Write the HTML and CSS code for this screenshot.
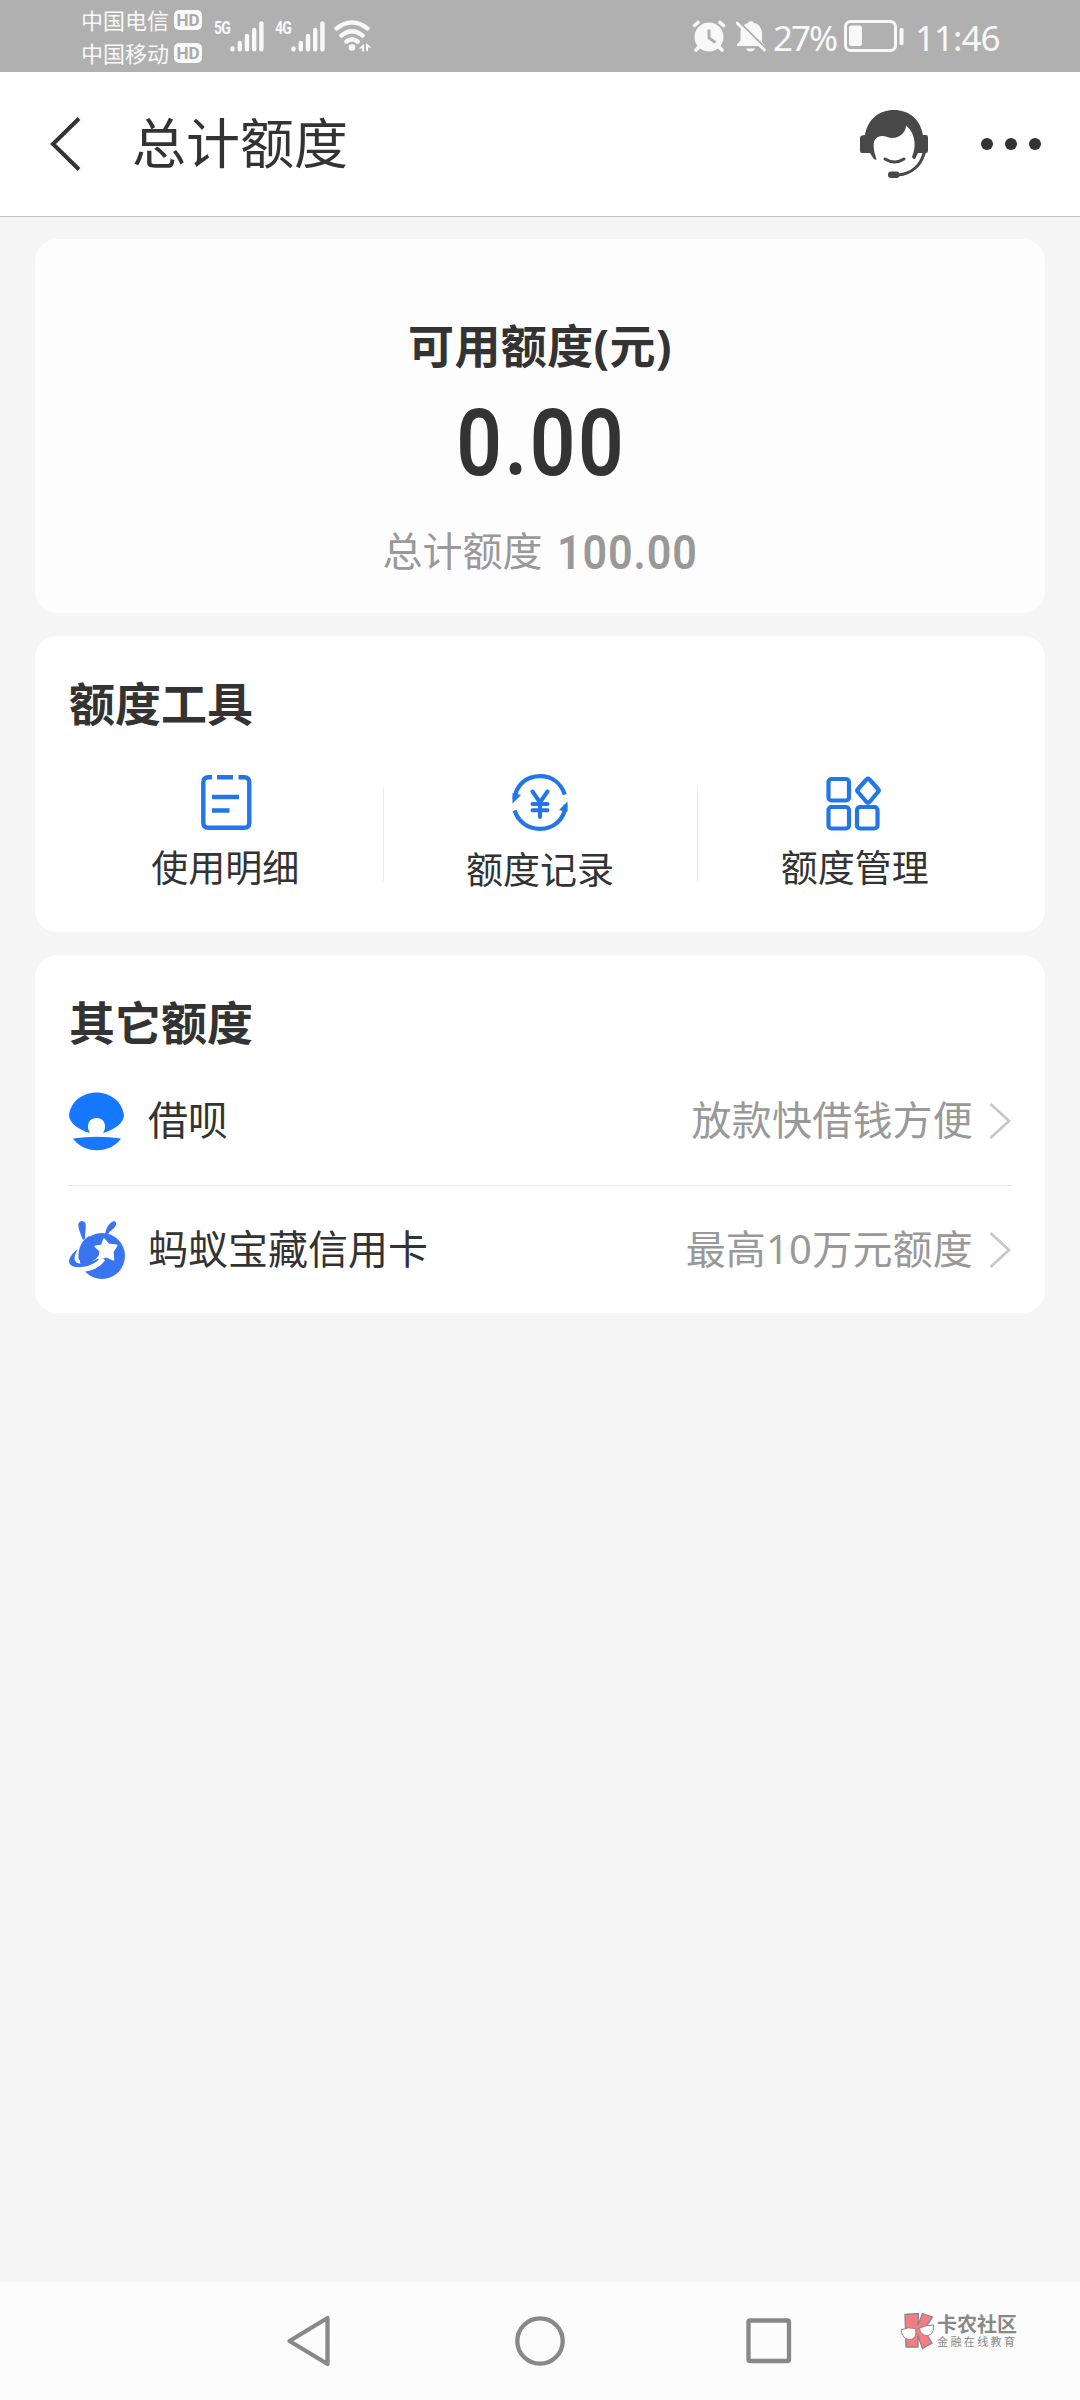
FILE: index.html
```
<!DOCTYPE html>
<html lang="zh-CN">
<head>
<meta charset="utf-8">
<title>总计额度</title>
<link rel="stylesheet" href="styles.css">
</head>
<body>
<div class="statusbar">
  <div class="carriers">
    <div class="carrier"><span>中国电信</span><span class="hd">HD</span></div>
    <div class="carrier"><span>中国移动</span><span class="hd">HD</span></div>
  </div>
  <div class="signal"><span class="gen">5G</span>
    <svg width="34" height="32" viewBox="0 0 34 32"><g stroke="#f8f8f8" stroke-width="4.4" stroke-linecap="round"><path d="M2.5 28.5v.8M9.8 23v6.3M17 16v13.300M24.200 10v19.300M31.400 3.500v25.800"/></g></svg>
  </div>
  <div class="signal second"><span class="gen">4G</span>
    <svg width="34" height="32" viewBox="0 0 34 32"><g stroke="#f8f8f8" stroke-width="4.4" stroke-linecap="round"><path d="M2.500 28.500v.8M9.800 23v6.300M17 16v13.300M24.200 10v19.300M31.400 3.500v25.800"/></g></svg>
  </div>
  <svg class="wifi" width="38" height="32" viewBox="0 0 38 32"><g fill="none" stroke="#f8f8f8" stroke-width="4.400" stroke-linecap="round"><path d="M2.500 8.500Q18 -3.500 33.500 8.500M7.500 15.500Q18 7 28.500 15.500M12.500 21.500Q18 17 23.500 21.500"/></g><circle cx="18" cy="27.500" r="3.300" fill="#f8f8f8"/><path d="M30 24v7.500h-1.800V28.500h-3.500zM32 31v-8l5.500 4.500h-3.500v3.500z" fill="#f8f8f8"/></svg>
  <div class="status-right">
    <svg width="34" height="32" viewBox="0 0 34 32"><path d="M2.500 5.500 6 2.500M28 2.500l3.500 3M7 27l-3 3M27 27l3 3" stroke="#f8f8f8" stroke-width="3.600" stroke-linecap="round"/><circle cx="17" cy="17" r="14.500" fill="#f8f8f8"/><path d="M17 9.500V18l6.500 4.500" fill="none" stroke="#b0b0b0" stroke-width="3"/></svg>
    <svg class="bell" width="30" height="33" viewBox="0 0 30 33"><path d="M4.500 13.500C4.500 7 8 4 12 3c1-2.500 5-2.500 6 0 5 1 8 5 8 11v8l3 4H1v-1.500l3.500-4zM10 28.500h9c-1 4-8 4-9 0z" fill="#f8f8f8"/><path d="M0 -.5 30 29" stroke="#b0b0b0" stroke-width="3"/><path d="M1 3 28.500 30" stroke="#f8f8f8" stroke-width="3" stroke-linecap="round"/></svg>
    <span class="percent">27%</span>
    <svg class="battery" width="60" height="32" viewBox="0 0 60 32"><rect x="1.500" y="1.500" width="50" height="29" rx="5" fill="none" stroke="#f8f8f8" stroke-width="3"/><rect x="5" y="5.500" width="13" height="20.500" rx="2.500" fill="#f8f8f8"/><rect x="55.500" y="8" width="4" height="17" rx="1.500" fill="#f8f8f8"/></svg>
    <span class="clock">11:46</span>
  </div>
</div>
<header class="header">
  <svg class="back" width="32" height="54" viewBox="0 0 32 54"><path d="M29 1.500 3 27l26 25.500" fill="none" stroke="#333" stroke-width="4"/></svg>
  <h1 class="title">总计额度</h1>
  <svg class="service" width="68" height="68" viewBox="0 0 68 68"><path fill="#484848" d="M5 25C8 9 19 0 34 0s26 9 29 25h3q2 0 2 2v14q0 2-2 2h-8l-3 6q-2 .5-3-2c4-9 4.500-23-6-31.500C46 22 40 28 32 28c-4 0-9-4-14-1-5 2-5.500 9-2.500 19l1 3.500q-2 .5-3-1L10 43H2q-2 0-2-2V28q0-3 5-3z"/><path d="M25 49q9.500 6 19 0" fill="none" stroke="#484848" stroke-width="3" stroke-linecap="round"/><path d="M64.500 42C61 55 52 64 38 65" fill="none" stroke="#484848" stroke-width="3"/><rect x="28" y="61.500" width="11.500" height="6.500" rx="3" fill="#484848"/></svg>
  <svg class="more" width="60" height="14" viewBox="0 0 60 14"><g fill="#333"><circle cx="6" cy="7" r="6"/><circle cx="30" cy="7" r="6"/><circle cx="54" cy="7" r="6"/></g></svg>
</header>
<main class="content">
  <section class="card summary">
    <h2 class="available">可用额度(元)</h2>
    <div class="amount">0.00</div>
    <div class="total"><span>总计额度</span><span class="total-value">100.00</span></div>
  </section>
  <section class="card tools">
    <h2 class="heading">额度工具</h2>
    <div class="tool-row">
      <div class="tool">
        <svg width="60" height="60" viewBox="0 0 60 60"><g fill="none" stroke="#2376e8" stroke-width="4.400"><path d="M17 4.200h-3.700q-5 0-5 5V49.800q0 5 5 5h36q5 0 5-5V9.200q0-5-5-5H43.500M22 4.200h16"/><path d="M17 24h27M17 37.500h17.500"/></g></svg>
        <span>使用明细</span>
      </div>
      <div class="tool lowered">
        <svg width="60" height="60" viewBox="0 0 60 60"><g fill="none" stroke="#2376e8" stroke-width="4.200"><path d="M4.500 26C6 12 16 3.200 30 3.200c12 0 21 7 24.800 18.500M55.500 32c-1 15-12 23.800-25.500 23.800C17 55.800 8 48 4.600 37.500"/><path stroke-linecap="round" d="m22.500 18.500 7.500 11 7.500-11M30 30v14M22.500 31h15M22.500 37.200h15" stroke-width="4"/></g><path d="M2.500 20v10.500l8.500-8.500zM57.500 39V28.500L49 37z" fill="#2376e8"/></svg>
        <span>额度记录</span>
      </div>
      <div class="tool">
        <svg width="60" height="60" viewBox="0 0 60 60"><g fill="none" stroke="#2376e8" stroke-width="4.200"><rect x="3.500" y="6" width="20.500" height="21.500" rx="3"/><rect x="3.500" y="34" width="20.500" height="21.500" rx="3"/><rect x="32" y="34" width="20.500" height="21.500" rx="3"/><path stroke-linejoin="round" d="M41.500 6.500q1.500-1.500 3 0l8.500 9.500q1.500 1.500 0 3L44.500 29q-1.500 1.500-3 0L33 19q-1.500-1.500 0-3z"/></g></svg>
        <span>额度管理</span>
      </div>
    </div>
  </section>
  <section class="card others">
    <h2 class="heading">其它额度</h2>
    <div class="row">
      <svg width="58" height="60" viewBox="0 0 58 60"><path fill="#1677ff" d="M1 24C3 10 15 1.500 28.500 1.500S54 10 56 24c0 8-10 15-21 18 4-6 2-15-6.500-15S18 36 22 42C11 39 1 32 1 24zM5 47.500q23.500-3.500 48 0C43 63 15 63 5 47.500z"/></svg>
      <span class="name">借呗</span>
      <span class="hint">放款快借钱方便</span>
      <svg class="chevron" width="22" height="38" viewBox="0 0 22 38"><path d="M1.500 2 20 19 1.500 36" fill="none" stroke="#c8c8c8" stroke-width="2.800"/></svg>
    </div>
    <div class="row">
      <svg width="58" height="60" viewBox="0 0 58 60"><g fill="#3975f0"><path d="M15 20C12 13 9.500 6 10.500 3.500c1-3.500 6-3.500 7 0 .8 4-.5 9-.5 15zM37 14.500C38 8 41 3 45 1.500c3-1 4 2 2.500 4.500-2 4-6 4-7.500 9z"/><circle cx="34" cy="36" r="23"/></g><path d="M-1 32h13v28H-1z" fill="#fff"/><path d="M8 48Q26 49 34 38" fill="none" stroke="#fff" stroke-width="8"/><path d="M10 29C-1 37-2 46 8 47c9 1 20-3 24-9-7 3-19 8-24 4-3-3-1-8 2-13z" fill="#3975f0"/><path d="M10.500 38C10 28 14 20 21 16l8 10-1 11q-8 4-16 3.500-1.500-.5-1.500-2.500z" fill="#3975f0"/><path d="M36 19.500 40.500 24.500 48.500 25.500 44.500 32 45.300 39.500 38.500 36.500 31.300 38.500 32.500 31 27.500 26.500 34 25.500z" fill="#fff" stroke="#fff" stroke-width="2" stroke-linejoin="round"/></svg>
      <span class="name">蚂蚁宝藏信用卡</span>
      <span class="hint">最高10万元额度</span>
      <svg class="chevron" width="22" height="38" viewBox="0 0 22 38"><path d="M1.500 2 20 19 1.500 36" fill="none" stroke="#c8c8c8" stroke-width="2.800"/></svg>
    </div>
  </section>
</main>
<nav class="navbar">
  <svg width="50" height="56" viewBox="0 0 50 56"><path d="M4.500 28 42.500 5v46z" fill="none" stroke="#888" stroke-width="4.300" stroke-linejoin="round"/></svg>
  <svg width="52" height="56" viewBox="0 0 52 56"><circle cx="26" cy="28" r="22.700" fill="none" stroke="#888" stroke-width="4.300"/></svg>
  <svg width="50" height="56" viewBox="0 0 50 56"><rect x="3.500" y="7.500" width="40.500" height="40.500" rx="1.500" fill="none" stroke="#888" stroke-width="4.300"/></svg>
  <div class="watermark">
    <svg width="36" height="38" viewBox="0 0 36 38"><path d="M5 2.500 18.500 1.500 18 13 22.500 1.500 32.500 5 24 18l8 13-9.500 5.500L18 24v11H6z" fill="#f47c83" stroke="#888" stroke-width="1.300"/><path d="M1 18q7-3.500 14.500-1.500c1.500 7-1 11-6 11-4.500 0-7.500-3.500-8.500-9.500zM19.500 16q7-3 14-3c.5 6-1.500 10-6 10.500-4.500 0-7.500-2.500-8-7.500z" fill="#fff" stroke="#888"/></svg>
    <div class="brand"><strong>卡农社区</strong><small>金融在线教育</small></div>
  </div>
</nav>
</body>
</html>
```
FILE: styles.css
```
* { box-sizing: border-box; margin: 0; padding: 0; }
body {
  width: 1080px;
  height: 2400px;
  display: flex;
  flex-direction: column;
  background: #f5f5f5;
  color: #333;
  font-family: "Noto Sans", "Noto Sans CJK SC", sans-serif;
  overflow: hidden;
}
svg { display: block; flex: none; }
span { white-space: nowrap; }

.statusbar {
  height: 72px;
  flex: none;
  display: flex;
  align-items: center;
  padding: 0 79px 0 81px;
  background: #b0b0b0;
  color: #f8f8f8;
}
.carriers { display: flex; flex-direction: column; padding-top: 1px; }
.carrier { display: flex; align-items: center; gap: 5px; height: 33px; font-size: 22px; line-height: 33px; }
.hd {
  width: 28px;
  height: 20px;
  border-radius: 5px;
  background: #f8f8f8;
  color: #aaa;
  font: 700 17px/20px Roboto, sans-serif;
  text-align: center;
}
.signal { display: flex; margin-left: 12px; width: 50px; height: 32px; }
.signal.second { margin-left: 11px; }
.gen { width: 16px; flex: none; font: 700 18px/15px "Roboto", sans-serif; letter-spacing: -1px; transform: scaleX(.78); transform-origin: left; }
.wifi { margin-left: 9px; }
.status-right { margin-left: auto; display: flex; align-items: center; }
.bell { margin-left: 10px; }
.percent, .clock { font-size: 35px; line-height: 44px; padding-top: 3px; }
.percent { width: 63px; margin-left: 7px; letter-spacing: -2px; }
.battery { margin-left: 8px; }
.clock { width: 86px; margin-left: 11px; letter-spacing: -1px; }

.header {
  height: 145px;
  flex: none;
  display: flex;
  align-items: center;
  padding: 0 39px 0 50px;
  background: #fff;
  border-bottom: 1px solid #c4c4c4;
}
.back { margin-top: -1px; }
.title { margin: -3px 0 0 50px; font-size: 54px; line-height: 80px; font-weight: 400; }
.service { margin-left: auto; }
.more { margin-left: 53px; }

.content { flex: 1; padding: 22px 35px 0; display: flex; flex-direction: column; gap: 23px; }
.card { border-radius: 22px; background: #fff; padding: 37px 33px 0; }
.summary { height: 374px; padding-top: 76px; text-align: center; background: #fdfdfd; }
.available, .heading { font-size: 46px; line-height: 60px; font-weight: 700; }
.heading { padding-left: 1px; }
.available { letter-spacing: .4px; }
.amount { margin-top: 24px; font: 600 93px/90px Roboto, sans-serif; letter-spacing: 3px; text-indent: 3px; transform: scaleX(.86); }
.total { margin-top: 37px; display: flex; justify-content: center; gap: 14px; font-size: 40px; line-height: 50px; color: #999; }
.total-value { width: 141px; font: 600 49px/52px Roboto, sans-serif; letter-spacing: 1px; padding-top: 1px; transform: scaleX(.88); transform-origin: left; }

.tools { height: 296px; }
.tool-row { display: flex; margin-top: 40px; }
.tool { width: 315px; display: flex; flex-direction: column; align-items: center; gap: 13px; font-size: 37px; line-height: 44px; }
.tool.lowered span { margin-top: 2px; }
.tool + .tool { background: linear-gradient(#ececec, #ececec) no-repeat left 14px / 1px 94px; }

.others { height: 358px; }
.row { height: 128px; display: flex; align-items: center; font-size: 40px; line-height: 60px; }
.heading + .row { height: 129px; margin-top: 5px; border-bottom: 1px solid #e8e8e8; }
.name, .hint { margin-top: -2px; }
.name { margin-left: 22px; }
.hint { margin-left: auto; color: #999; letter-spacing: .2px; }
.chevron { margin: -1px 1px 0 16px; }

.navbar { height: 118px; flex: none; display: flex; align-items: center; padding-left: 285px; background: #fcfcfc; }
.navbar > svg + svg { margin-left: 179px; }
.watermark { display: flex; margin: -21px 0 0 105px; color: #888; }
.brand { padding: 3px 0 0 1px; display: flex; flex-direction: column; }
.brand strong { font-size: 20px; line-height: 20px; }
.brand small { font-size: 11px; line-height: 14px; letter-spacing: 2.400px; }
```
